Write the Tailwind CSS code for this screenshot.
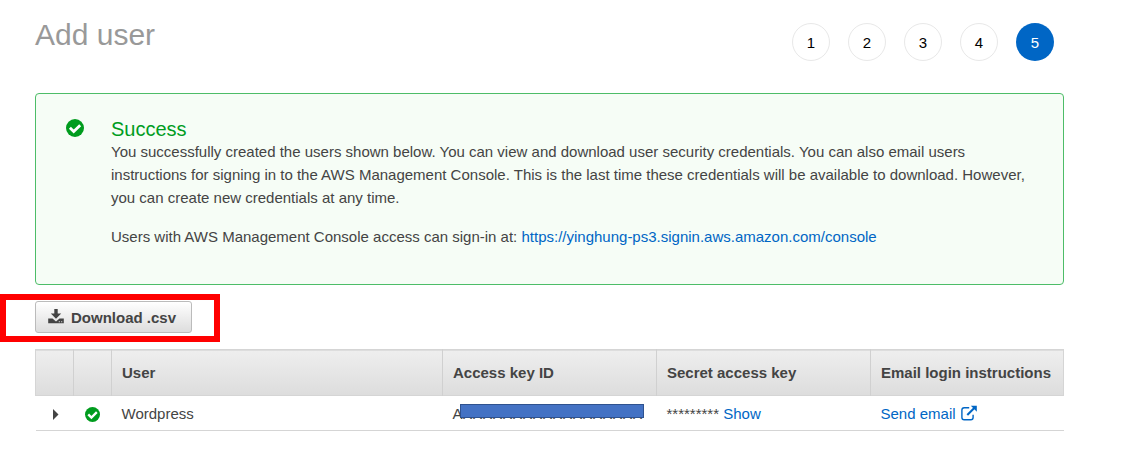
<!DOCTYPE html>
<html lang="en">
<head>
<meta charset="utf-8">
<meta name="viewport" content="width=device-width, initial-scale=1">
<title>Add user</title>
<script src="https://cdn.jsdelivr.net/npm/@tailwindcss/browser@4"></script>
</head>
<body class="bg-white pt-3 pr-21 pb-8 pl-[35px] font-['Liberation_Sans',Arial,sans-serif] text-[15px] leading-[23px] text-[#444]">
  <header class="flex items-start justify-between pr-[10px]">
    <h1 class="text-[30px] leading-[46px] text-[#999]">Add user</h1>
    <ol class="flex gap-[18px] pt-[11px] text-black">
      <li class="flex size-[38px] items-center justify-center rounded-full border border-[#e8e8e8] pt-px">1</li>
      <li class="flex size-[38px] items-center justify-center rounded-full border border-[#e8e8e8] pt-px">2</li>
      <li class="flex size-[38px] items-center justify-center rounded-full border border-[#e8e8e8] pt-px">3</li>
      <li class="flex size-[38px] items-center justify-center rounded-full border border-[#e8e8e8] pt-px">4</li>
      <li aria-current="step" class="flex size-[38px] items-center justify-center rounded-full bg-[#0066c5] pt-px text-white">5</li>
    </ol>
  </header>

  <main>
    <section class="mt-8 flex rounded-[4px] border border-[#4dbd68] bg-[#f6fdf6] pt-6 pr-5 pb-9 pl-[30px]">
      <svg class="mt-px size-[18px] shrink-0" viewBox="0 0 18 18" aria-hidden="true">
        <circle cx="9" cy="9" r="9" fill="#009c1e"/>
        <path d="M3.9 8.8 7.7 12.6 14.2 6.2" fill="none" stroke="#fff" stroke-width="2.8"/>
      </svg>
      <div class="ml-[27px]">
        <h2 class="text-[20px] leading-[22px] text-[#009c1e]">Success</h2>
        <p>You successfully created the users shown below. You can view and download user security credentials. You can also email users instructions for signing in to the AWS Management Console. This is the last time these credentials will be available to download. However, you can create new credentials at any time.</p>
        <p class="mt-4">Users with AWS Management Console access can sign-in at: <a href="#" class="text-[#0066c5]">https://yinghung-ps3.signin.aws.amazon.com/console</a></p>
      </div>
    </section>

    <div class="relative mt-4 w-fit">
      <button type="button" class="flex h-8 items-center gap-[7px] rounded-[3px] border border-[#bbb] bg-linear-to-b from-white to-[#ddd] pr-[15px] pl-3 font-bold">
        <svg class="size-4" viewBox="0 0 16 16" fill="#444" aria-hidden="true">
          <path d="M6.3 0h3.4v4.6h3.5L8 9.8 2.8 4.6h3.5z"/>
          <path d="M0.2 9.6h4.3L8 12.4l3.5-2.8h4.3v4.6H0.2z"/>
          <path d="M10.8 12.2h1v1h-1zM13.2 12.2h1v1h-1z" fill="#eee"/>
        </svg>
        Download .csv
      </button>
      <div class="pointer-events-none absolute -top-[7px] -right-7 -bottom-[9px] -left-[35px] border-6 border-[#f00]"></div>
    </div>

    <table class="mt-4 w-full table-fixed border-collapse text-left">
      <colgroup>
        <col class="w-[38px]"><col class="w-[38px]"><col><col class="w-[214px]"><col class="w-[214px]"><col class="w-[193px]">
      </colgroup>
      <thead>
        <tr class="h-[46px] border border-[#d5d5d5] bg-linear-to-b from-[#eee] to-[#ddd]">
          <th class="border-r border-[#d0d0d0]"></th>
          <th class="border-r border-[#d0d0d0]"></th>
          <th class="border-r border-[#d0d0d0] px-[10px]">User</th>
          <th class="border-r border-[#d0d0d0] px-[10px]">Access key ID</th>
          <th class="border-r border-[#d0d0d0] px-[10px]">Secret access key</th>
          <th class="px-[10px] whitespace-nowrap">Email login instructions</th>
        </tr>
      </thead>
      <tbody>
        <tr class="h-[35px] border-b border-[#d5d5d5]">
          <td>
            <button type="button" aria-label="Expand row" class="ml-4 block pt-[3px]">
              <svg class="h-[11px] w-[7px]" viewBox="0 0 7 11" aria-hidden="true"><path d="M1 0 6.5 5.5 1 11z" fill="#444"/></svg>
            </button>
          </td>
          <td>
            <svg class="mx-auto mt-[2px] size-[15px]" viewBox="0 0 18 18" aria-hidden="true">
              <circle cx="9" cy="9" r="9" fill="#009c1e"/>
              <path d="M3.9 8.8 7.7 12.6 14.2 6.2" fill="none" stroke="#fff" stroke-width="2.8"/>
            </svg>
          </td>
          <td class="px-[10px]">Wordpress</td>
          <td class="pl-[10px]">
            <div class="relative w-48">AXXXXXXXXXXXXXXXXXX
              <span class="absolute top-[2px] right-px left-[7px] h-[14px] border border-[#2f528f] bg-[#4472c4]"></span>
            </div>
          </td>
          <td class="px-[10px]">********* <a href="#" class="text-[#0066c5]">Show</a></td>
          <td class="px-[10px]">
            <a href="#" class="flex items-center gap-[5px] text-[#0066c5]">Send email
              <svg class="size-4" viewBox="0 0 16 16" fill="none" stroke="#0066c5" aria-hidden="true">
                <path d="M8.2 2.7H3.2Q0.9 2.7 0.9 5V12.5Q0.9 14.8 3.2 14.8H9.8Q12.1 14.8 12.1 12.5V9.8" stroke-width="1.4"/>
                <path d="M6.3 10 13.3 3" stroke-width="2"/>
                <path d="M9.8 0.8h6v6z" fill="#0066c5" stroke="none"/>
              </svg>
            </a>
          </td>
        </tr>
      </tbody>
    </table>
  </main>
</body>
</html>
